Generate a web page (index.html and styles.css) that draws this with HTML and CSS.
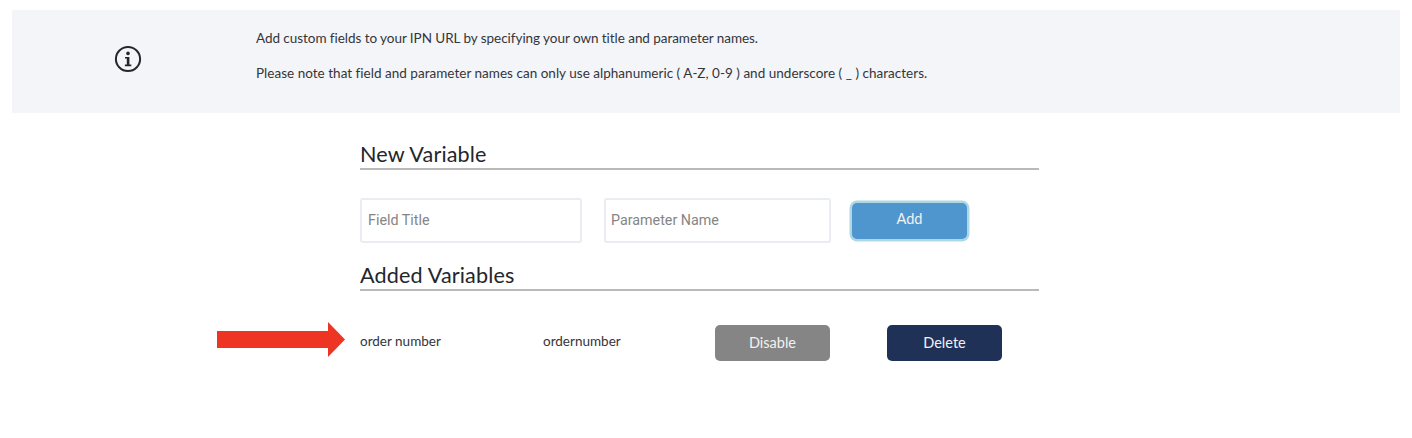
FILE: index.html
```html
<!DOCTYPE html>
<html lang="en">
<head>
  <meta charset="UTF-8">
  <title>IPN Variables</title>
  <link rel="stylesheet" href="styles.css">
</head>
<body>
  <div class="notice">
    <div class="notice-icon">
      <svg width="28" height="28" viewBox="0 0 28 28" fill="none">
        <circle cx="14" cy="14" r="12.1" stroke="#23262b" stroke-width="2"/>
        <circle cx="14" cy="8.4" r="1.8" fill="#23262b"/>
        <path d="M11 12h4.4v7.6h1.9v1.6h-6.4v-1.6h1.9v-6H11z" fill="#23262b"/>
      </svg>
    </div>
    <div class="notice-text">
      <p class="notice-lead">Add custom fields to your IPN URL by specifying your own title and parameter names.</p>
      <p>Please note that field and parameter names can only use alphanumeric ( A-Z, 0-9 ) and underscore ( _ ) characters.</p>
    </div>
  </div>

  <div class="content">
    <h2 class="heading">New Variable</h2>
    <div class="new-form">
      <input class="field field-title" type="text" placeholder="Field Title">
      <input class="field field-param" type="text" placeholder="Parameter Name">
      <button class="btn btn-add">Add</button>
    </div>

    <h2 class="heading">Added Variables</h2>
    <div class="var-row">
      <svg class="arrow" width="128" height="35" viewBox="0 0 128 35">
        <path d="M0 9h111V0l17 17.5-17 17.5v-9H0z" fill="#ee3524"/>
      </svg>
      <span class="var-text">order number</span>
      <span class="var-text">ordernumber</span>
      <button class="btn btn-disable">Disable</button>
      <button class="btn btn-delete">Delete</button>
    </div>
  </div>
</body>
</html>
```

FILE: styles.css
```css
body {
  margin: 0;
  padding: 10px 12px 0;
  font-family: 'Lato', 'Open Sans', sans-serif;
  background: #fff;
  color: #333539;
}
.notice {
  display: flex;
  align-items: center;
  height: 103px;
  background: #f4f5f9;
}
.notice-icon {
  width: 244px;
  padding-left: 102px;
  box-sizing: border-box;
  display: flex;
  margin-top: -5px;
}
.notice-text {
  font-size: 13.5px;
  letter-spacing: 0.02px;
  margin-top: -12px;
}
.notice-text p {
  margin: 0;
  line-height: 18px;
}
.notice-text .notice-lead {
  letter-spacing: -0.05px;
}
.notice-text p + p {
  margin-top: 17px;
}
.content {
  width: 679px;
  margin-left: 348px;
}
.heading {
  margin: 0;
  padding-bottom: 1px;
  font-size: 21.6px;
  font-weight: 400;
  letter-spacing: 0.15px;
  line-height: 26px;
  color: #23262b;
  border-bottom: 2px solid #b9b9b9;
}
.content > .heading:first-child {
  margin-top: 28px;
}
.new-form {
  display: flex;
  align-items: center;
  margin: 28px 0 19px;
}
.field {
  box-sizing: border-box;
  height: 45px;
  padding: 0 6px 2px;
  font-family: 'Roboto', sans-serif;
  font-size: 14.3px;
  background: #fff;
  border: 2px solid #e9edf1;
  border-radius: 3px;
}
.field::placeholder {
  color: #858585;
  opacity: 1;
}
.field-title {
  width: 222px;
  margin-right: 22px;
}
.field-param {
  width: 227px;
  margin-right: 21px;
  padding-left: 5px;
}
.btn {
  box-sizing: border-box;
  width: 115px;
  height: 36px;
  padding: 0 0 2px;
  font-family: 'Lato', 'Open Sans', sans-serif;
  font-size: 14.5px;
  color: #f2f2f2;
  border: none;
  border-radius: 5px;
}
.btn-add {
  background: #4f96cf;
  box-shadow: 0 0 0 2.5px #aed7e6;
  padding-bottom: 4px;
}
.btn-disable {
  background: #858585;
}
.btn-delete {
  background: #203158;
}
.var-row {
  position: relative;
  display: grid;
  grid-template-columns: 183px 172px 115px 57px 115px;
  align-items: center;
  margin-top: 34px;
  font-size: 13.5px;
}
.var-text {
  margin-bottom: 4px;
}
.var-row .btn-delete {
  grid-column: 5;
}
.arrow {
  position: absolute;
  left: -143px;
  top: -3px;
}
```
